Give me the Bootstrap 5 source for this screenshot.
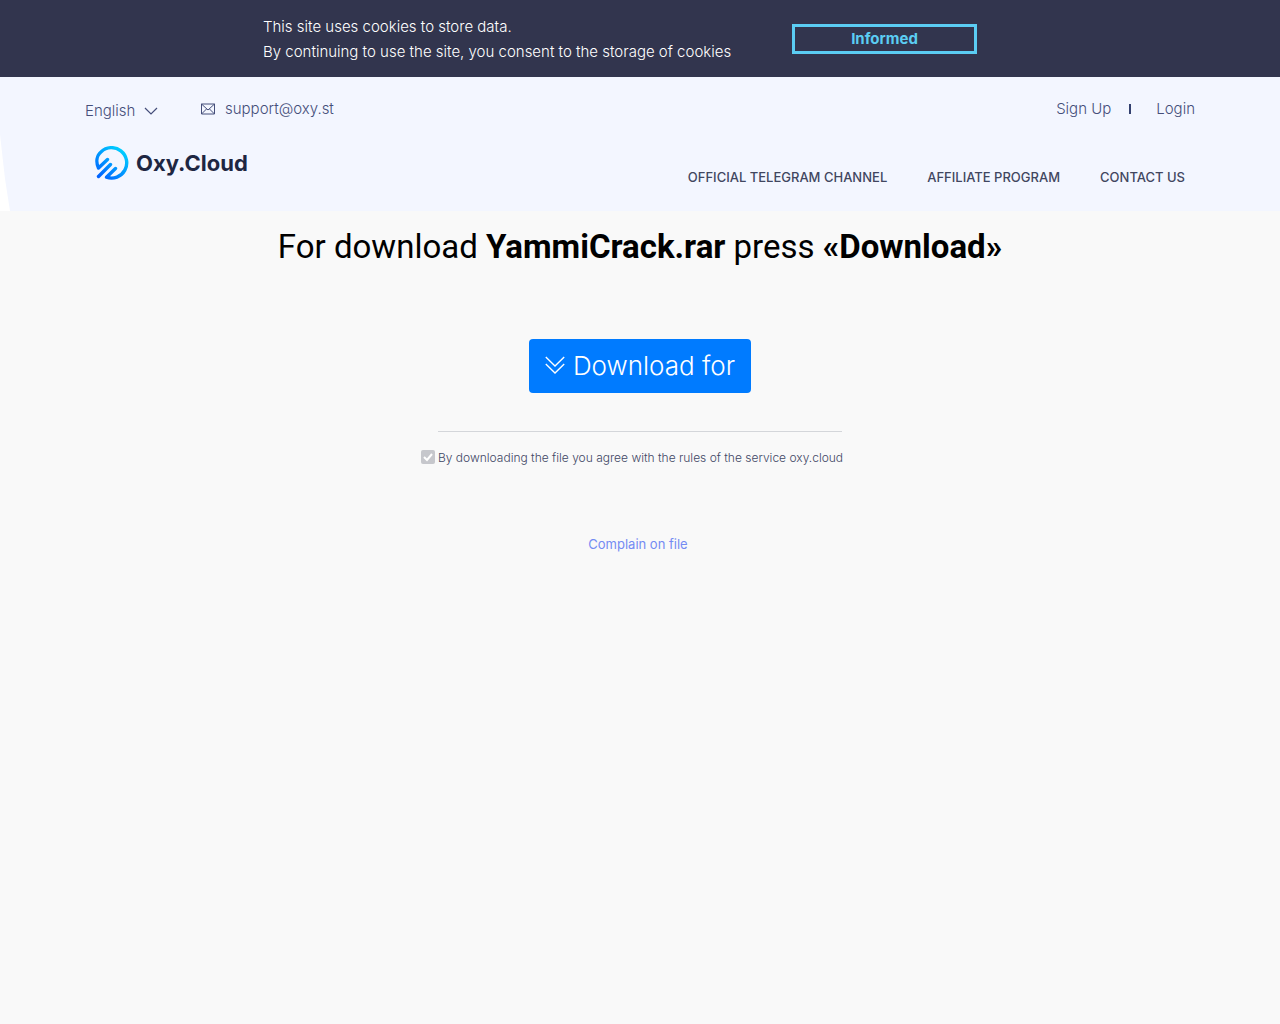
<!DOCTYPE html>
<html lang="en">
<head>
<meta charset="utf-8">
<meta name="viewport" content="width=device-width, initial-scale=1">
<title>Oxy.Cloud - YammiCrack.rar</title>
<link href="https://cdn.jsdelivr.net/npm/bootstrap@5.3.0/dist/css/bootstrap.min.css" rel="stylesheet">
<style>
  body { font-family: Inter, "Open Sans", sans-serif; font-size: 15px; line-height: 24px; color: #3f4765; background: #f9f9f9; }
  .cookie-bar { background: #32354e; color: #fff; padding: 14px 40px 13px 0; font-weight: 300; line-height: 25px; }
  .cookie-text { flex: 0 1 529px; }
  .btn-informed { width: 185px; height: 30px; padding: 0; border: 3px solid #5bcdf3; border-radius: 0; color: #5bcdf3; font-size: 15px; font-weight: 700; line-height: 20px; }
  .btn-informed:hover { background: #5bcdf3; color: #32354e; }
  .site-header { background: #fff; }
  .header-shape { background: #f3f6ff; padding: 20px 0 28px; clip-path: polygon(0 0, 100% 0, 100% 100%, 10px 100%, 5px 76%, 0 43%); }
  .page-width { padding-left: 15px; padding-right: 15px; }
  .top-link { color: #454e7a; font-weight: 300; text-decoration: none; }
  .lang-select { width: 74px; padding: 4px 0 0; border: 0; appearance: none; color: #454e7a; font-size: 15px; font-weight: 300; line-height: 20px;
    background: transparent url("data:image/svg+xml,%3Csvg xmlns='http://www.w3.org/2000/svg' viewBox='0 0 14 8'%3E%3Cpath d='M1 1l6 6 6-6' fill='none' stroke='%23454e7a' stroke-width='1.2'/%3E%3C/svg%3E") no-repeat right 1px top 10px / 14px 8px; }
  .mail-link { margin-left: 42px; gap: 10px; }
  .divider { width: 2px; height: 10px; background: #33406f; margin: 0 25px 0 18px; }
  .brand-row { padding: 25px 10px 0; }
  .brand { gap: 7px; color: #1e2642; font-size: 22px; font-weight: 700; line-height: 34px; text-decoration: none; }
  .main-nav { gap: 40px; padding-top: 25px; }
  .main-nav a { color: #41465f; font-size: 13px; font-weight: 500; line-height: 12px; text-transform: uppercase; text-decoration: none; }
  .file-title { margin: 16px 0 72px; color: #000; font-family: Roboto, sans-serif; font-size: 33px; font-weight: 400; line-height: 40px; }
  .btn-download { background: #007bff; color: #fff; width: 222px; height: 54px; padding: 0 0 2px; border: 0; border-radius: 4px; font-size: 26px; font-weight: 300; gap: 8px; }
  .btn-download:hover { background: #0069d9; color: #fff; }
  .rules { width: 438px; max-width: 100%; margin: 38px auto 0; padding: 0 17px; }
  .rules hr { margin: 0 0 18px; border-color: #d4d6da; opacity: 1; }
  .rules-check { margin-left: -17px; gap: 3px; }
  .rules-check input { flex: none; width: 14px; height: 14px; margin: 0; opacity: 1;
    appearance: none; border-radius: 2px;
    background: #c6c7cc url("data:image/svg+xml,%3Csvg xmlns='http://www.w3.org/2000/svg' viewBox='0 0 14 14'%3E%3Cpath d='M3 7l3 3 5-6' fill='none' stroke='%23fff' stroke-width='2'/%3E%3C/svg%3E"); }
  .rules-check label { font-size: 12px; font-weight: 300; line-height: 14px; padding-top: 1px; white-space: nowrap; }
  .complain { display: inline-block; margin-top: 69px; padding-right: 4px; color: #748bf3; font-size: 13px; line-height: 20px; text-decoration: none; }
</style>
<script src="https://cdn.jsdelivr.net/npm/bootstrap@5.3.0/dist/js/bootstrap.bundle.min.js"></script>
</head>
<body>
<div class="cookie-bar d-flex justify-content-center align-items-center">
  <div class="cookie-text">This site uses cookies to store data.<br>By continuing to use the site, you consent to the storage of cookies</div>
  <button type="button" class="btn btn-informed">Informed</button>
</div>
<header class="site-header">
  <div class="header-shape">
    <div class="container page-width">
      <div class="d-flex justify-content-between align-items-center">
        <div class="d-flex align-items-center">
          <select class="lang-select" aria-label="Language"><option>English</option></select>
          <a class="top-link mail-link d-flex align-items-center" href="mailto:support@oxy.st">
            <svg width="14" height="12" viewBox="0 0 14 12" fill="none" stroke="#454e7a" aria-hidden="true"><path d="M.5 1v10h13V1zM.5 1L7 7l6.500-6M.5 11l5-5M13.500 11l-5-5"/></svg>support@oxy.st</a>
        </div>
        <div class="d-flex align-items-center">
          <a class="top-link" href="#">Sign Up</a><span class="divider"></span><a class="top-link" href="#">Login</a>
        </div>
      </div>
      <div class="brand-row d-flex flex-wrap justify-content-between align-items-start">
        <a class="brand d-flex align-items-center" href="#">
          <svg width="34" height="34" viewBox="0 0 34 34" fill="none" stroke="url(#ring)" stroke-width="3.400" stroke-linecap="round" stroke-linejoin="round" aria-hidden="true">
            <defs><linearGradient id="ring" gradientUnits="userSpaceOnUse" x1="6" y1="32" x2="28" y2="4"><stop offset="0" stop-color="#0062ff"/><stop offset=".5" stop-color="#0098ff"/><stop offset="1" stop-color="#00d0ff"/></linearGradient></defs>
            <path d="M12.500 13.500L3.500 22C.8 16 1.500 9.500 6.200 5.700A15.200 15.200 0 1 1 11.500 31.200L20.500 22.500M15.500 18.500L3.500 30.500"/>
          </svg>Oxy.Cloud</a>
        <nav class="main-nav d-flex flex-wrap" aria-label="Main">
          <a href="#">Official Telegram channel</a><a href="#">Affiliate program</a><a href="#">Contact us</a>
        </nav>
      </div>
    </div>
  </div>
</header>
<main class="container page-width text-center">
  <h1 class="file-title">For download <b>YammiCrack.rar</b> press <b>«Download»</b></h1>
  <button type="button" class="btn btn-download d-inline-flex align-items-center justify-content-center">
    <svg width="20" height="18" viewBox="0 0 20 18" fill="none" stroke="#fff" stroke-width="1.400" aria-hidden="true"><path d="M.8 1l9.200 9 9.200-9M.8 8l9.200 9 9.200-9"/></svg>Download for
  </button>
  <div class="rules">
    <hr>
    <div class="rules-check d-flex text-start">
      <input type="checkbox" id="agree" checked disabled>
      <label for="agree">By downloading the file you agree with the rules of the service oxy.cloud</label>
    </div>
  </div>
  <a class="complain" href="#">Complain on file</a>
</main>
</body>
</html>
